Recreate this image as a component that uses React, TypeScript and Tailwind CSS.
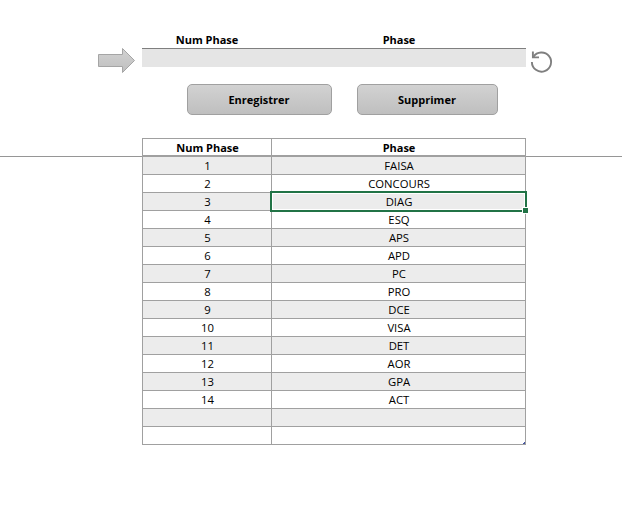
const phases = ["FAISA", "CONCOURS", "DIAG", "ESQ", "APS", "APD", "PC", "PRO", "DCE", "VISA", "DET", "AOR", "GPA", "ACT", "", ""];

function Arrow() {
  return (
    <svg className="mt-[47px] ml-[97px] h-[28px] w-[39px] shrink-0" viewBox="0 0 39 28">
      <defs>
        <linearGradient id="arrow" x1="0" y1="0" x2="0" y2="1">
          <stop offset="0" stopColor="#d2d2d2" />
          <stop offset="1" stopColor="#bfbfbf" />
        </linearGradient>
      </defs>
      <path d="M1.5 7.5H25.5V1.5L37.5 13.5L25.5 25.5V19.5H1.5Z" fill="url(#arrow)" stroke="#a5a5a5" />
    </svg>
  );
}

function Reset() {
  return (
    <svg className="mt-[48px] ml-[4px] h-[28px] w-[24px] shrink-0" viewBox="0 0 24 28" fill="none" stroke="#7f7f7f" strokeWidth="1.9">
      <path d="M1.9 14A9.6 9.6 0 1 0 3.4 8.9" />
      <path d="M2.9 3.5V9.4H9" />
    </svg>
  );
}

function Button({ label, className }: { label: string; className: string }) {
  return (
    <button className={`h-[31px] rounded-[5px] border border-[#a0a0a0] bg-linear-to-b from-[#d2d2d2] to-[#bfbfbf] pt-px pr-px text-center font-bold ${className}`}>
      {label}
    </button>
  );
}

export default function App() {
  return (
    <main className="relative h-[523px] w-[622px] overflow-hidden bg-white font-['Open_Sans','Noto_Sans',sans-serif] text-[11px] leading-[18px] text-black">
      <div className="absolute top-[156px] left-0 h-px w-full bg-[#969696]" />
      <div className="flex h-[84px] items-start">
        <Arrow />
        <div className="ml-[6px] w-[384px] shrink-0 pt-[31px]">
          <div className="grid h-[18px] grid-cols-[130px_254px] border-b border-[#7f7f7f] text-center font-bold">
            <span>Num Phase</span>
            <span>Phase</span>
          </div>
          <div className="h-[18px] bg-[#e5e5e5]" />
        </div>
        <Reset />
      </div>
      <div className="flex gap-[25px] pl-[187px]">
        <Button label="Enregistrer" className="w-[145px]" />
        <Button label="Supprimer" className="w-[141px]" />
      </div>
      <div className="relative mt-[23px] ml-[142px] w-[384px] border-t border-l border-[#a0a0a0] bg-white text-center">
        <div className="grid h-[18px] grid-cols-[129px_254px] border-b-2 border-[#a0a0a0] font-bold">
          <span className="h-[16px] border-r border-[#a0a0a0] pl-px">Num Phase</span>
          <span className="h-[16px] border-r border-[#a0a0a0] pl-px">Phase</span>
        </div>
        {phases.map((phase, i) => (
          <div key={i} className="grid h-[18px] grid-cols-[129px_254px] border-b border-[#a0a0a0] text-[11.3px] odd:bg-white even:bg-[#ececec]">
            <span className="h-[17px] border-r border-[#a0a0a0] pl-px">{phase ? i + 1 : ""}</span>
            <span className="h-[17px] border-r border-[#a0a0a0] pl-px">{phase}</span>
          </div>
        ))}
        <div className="absolute top-[52px] left-[127px] h-[21px] w-[257px] border-2 border-[#217346]">
          <div className="h-full w-full border border-white" />
          <div className="absolute -right-[4px] -bottom-[4px] h-[7px] w-[7px] border border-white bg-[#217346]" />
        </div>
        <svg className="absolute right-px bottom-px h-[2px] w-[2px]" viewBox="0 0 2 2" fill="#4455a0"><path d="M1 0H2V2H0V1H1Z" /></svg>
      </div>
    </main>
  );
}
